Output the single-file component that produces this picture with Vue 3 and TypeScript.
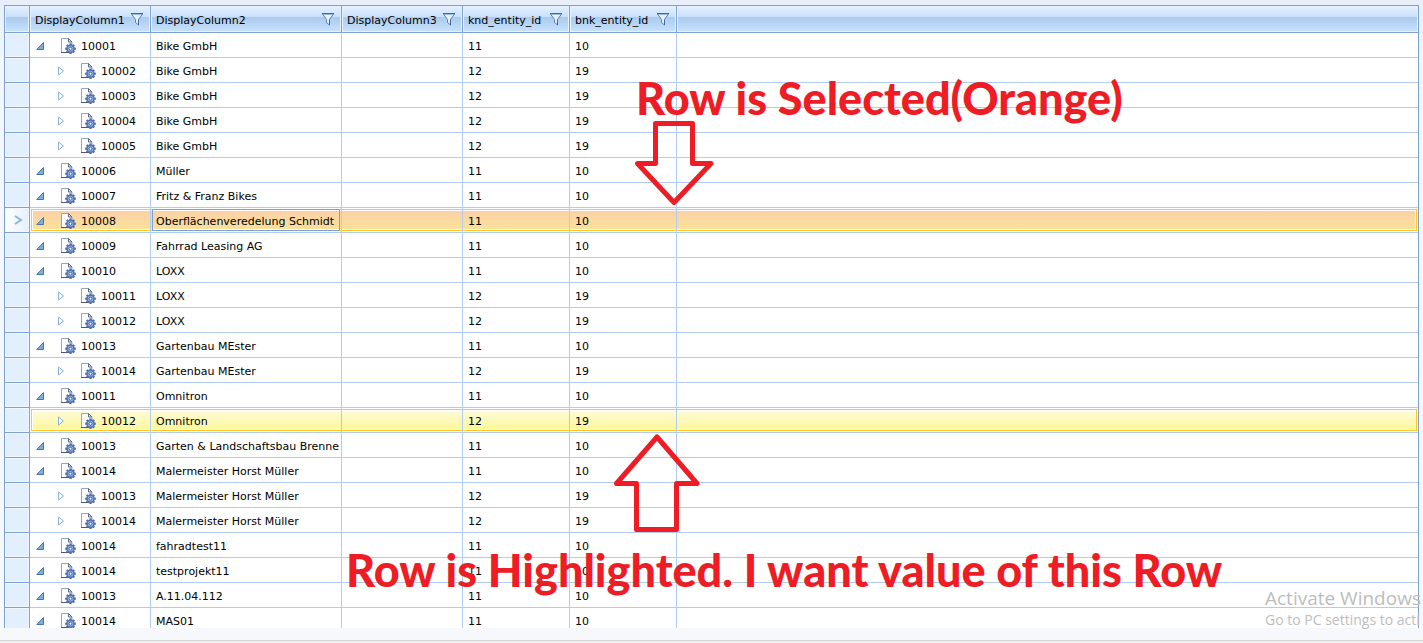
<script setup lang="ts">
import { ref } from 'vue'

interface Row {
  id: string
  name: string
  level: 0 | 1
}

const columns = ['DisplayColumn1', 'DisplayColumn2', 'DisplayColumn3', 'knd_entity_id', 'bnk_entity_id']

const rows: Row[] = [
  { id: '10001', name: 'Bike GmbH', level: 0 },
  { id: '10002', name: 'Bike GmbH', level: 1 },
  { id: '10003', name: 'Bike GmbH', level: 1 },
  { id: '10004', name: 'Bike GmbH', level: 1 },
  { id: '10005', name: 'Bike GmbH', level: 1 },
  { id: '10006', name: 'Müller', level: 0 },
  { id: '10007', name: 'Fritz & Franz Bikes', level: 0 },
  { id: '10008', name: 'Oberflächenveredelung Schmidt', level: 0 },
  { id: '10009', name: 'Fahrrad Leasing AG', level: 0 },
  { id: '10010', name: 'LOXX', level: 0 },
  { id: '10011', name: 'LOXX', level: 1 },
  { id: '10012', name: 'LOXX', level: 1 },
  { id: '10013', name: 'Gartenbau MEster', level: 0 },
  { id: '10014', name: 'Gartenbau MEster', level: 1 },
  { id: '10011', name: 'Omnitron', level: 0 },
  { id: '10012', name: 'Omnitron', level: 1 },
  { id: '10013', name: 'Garten & Landschaftsbau Brenne', level: 0 },
  { id: '10014', name: 'Malermeister Horst Müller', level: 0 },
  { id: '10013', name: 'Malermeister Horst Müller', level: 1 },
  { id: '10014', name: 'Malermeister Horst Müller', level: 1 },
  { id: '10014', name: 'fahradtest11', level: 0 },
  { id: '10014', name: 'testprojekt11', level: 0 },
  { id: '10013', name: 'A.11.04.112', level: 0 },
  { id: '10014', name: 'MAS01', level: 0 },
]

const selected = ref(7)
const highlighted = 15
const teeth = [0, 45, 90, 135, 180, 225, 270, 315]
</script>

<template>
  <div class="page">
    <main class="grid">
      <table>
        <colgroup>
          <col class="c-mark" /><col class="c-tree" /><col class="c-name" /><col class="c-tree" />
          <col class="c-id" /><col class="c-id" /><col />
        </colgroup>
        <thead>
          <tr>
            <th></th>
            <th v-for="c in columns" :key="c" scope="col">
              <div class="head">
                <span>{{ c }}</span>
                <button class="filter" type="button" :aria-label="'Filter ' + c">
                  <svg width="12" height="13" viewBox="0 0 12 13">
                    <path d="M.5 1H11.5L7.5 6.500V12L4.500 9.500V6.500Z" fill="#e4f1fe" stroke="#5482bd" />
                    <path d="M0 .5H12" stroke="#3c6aa6" />
                    <path d="M7.500 6.500V12" stroke="#41699f" />
                  </svg>
                </button>
              </div>
            </th>
            <th></th>
          </tr>
        </thead>
        <tbody>
          <tr
            v-for="(r, i) in rows"
            :key="i"
            :class="{ selected: i === selected, highlighted: i === highlighted }"
            @click="selected = i"
          >
            <td class="mark">
              <svg v-if="i === selected" width="9" height="10" viewBox="0 0 9 10">
                <path d="M1 1L7 5L1 9" fill="none" stroke="#8db4e3" stroke-width="2" />
              </svg>
            </td>
            <td class="node">
              <div class="tree" :class="{ child: r.level === 1 }">
                <button class="toggle" type="button" :aria-label="(r.level ? 'Expand ' : 'Collapse ') + r.id">
                  <svg width="10" height="10" viewBox="0 0 10 10">
                    <path v-if="r.level" d="M2.500 1V9L7.500 5Z" fill="#fff" stroke="#8cb0dc" />
                    <path v-else d="M7.500 1.500V8.500H.8Z" fill="#7db0e0" stroke="#4674ad" />
                  </svg>
                </button>
                <svg class="doc" width="16" height="17" viewBox="0 0 16 17">
                  <path d="M.5 .5H7.500L11 4V14.500H.5Z" fill="#fbfcfe" stroke="#97a5bb" />
                  <path d="M7.500 .5V4H11Z" fill="#dbe3ee" stroke="#5e6d88" />
                  <path d="M0 14.500H8" stroke="#49587a" />
                  <g transform="translate(9.500 10.700)">
                    <rect
                      v-for="a in teeth"
                      :key="a"
                      x="-1.100"
                      y="-5.300"
                      width="2.200"
                      height="3"
                      fill="#4a69a8"
                      :transform="`rotate(${a})`"
                    />
                    <circle r="3.500" fill="#9db5e4" stroke="#5273b5" stroke-width="1.500" />
                    <circle r="1.500" fill="#f5f8ff" stroke="#38558f" stroke-width=".9" />
                  </g>
                </svg>
                <span>{{ r.id }}</span>
              </div>
            </td>
            <td :class="{ current: i === selected }">{{ r.name }}</td>
            <td></td>
            <td>{{ r.level ? 12 : 11 }}</td>
            <td>{{ r.level ? 19 : 10 }}</td>
            <td></td>
          </tr>
        </tbody>
      </table>
    </main>
    <footer class="status"></footer>

    <p class="note note-selected">Row is Selected(Orange)</p>
    <svg class="arrow arrow-down" width="80" height="86" viewBox="0 0 80 86">
      <path d="M21.500 3.500H58.500V43.500H77L40 82.500L3.500 43.500H21.500Z" />
    </svg>
    <svg class="arrow arrow-up" width="88" height="98" viewBox="0 0 88 98">
      <path d="M44 3L84 49.500H63.500V95.500H23.500V49.500H3.500Z" />
    </svg>
    <p class="note note-highlighted">Row is Highlighted. I want value of this Row</p>

    <div class="watermark">
      <p class="wm-title">Activate Windows</p>
      <p class="wm-text">Go to PC settings to acti</p>
    </div>
  </div>
</template>

<style>
body {
  margin: 0;
}
</style>

<style scoped>
.page {
  position: relative;
  display: flex;
  flex-direction: column;
  box-sizing: border-box;
  height: 100vh;
  padding-top: 5px;
  overflow: hidden;
  background: linear-gradient(#e8eff8, #f3f6fb 60px, #f7f8fc);
  font: 11px/16px "DejaVu Sans", Verdana, sans-serif;
  color: #000;
}
.grid {
  flex: 1;
  min-height: 0;
  margin: 0 4px;
  overflow: hidden;
  border: solid #7da1d0;
  border-width: 1px 1px 0;
  background: #fff;
}
table {
  width: 100%;
  table-layout: fixed;
  border-collapse: separate;
  border-spacing: 0;
}
.c-mark { width: 25px; }
.c-tree { width: 121px; }
.c-name { width: 191px; }
.c-id { width: 107px; }
th {
  box-sizing: border-box;
  height: 27px;
  padding: 0;
  border: solid #7da1d0;
  border-width: 0 1px 1px 0;
  background: linear-gradient(#e6f1ff, #c9dffb 42%, #a9caee 43%, #c9e2fc);
  box-shadow: inset 0 0 0 1px #e6f2ff;
  font-weight: normal;
  text-align: left;
}
th:last-child, td:last-child { border-right: 0; }
.head {
  display: flex;
  align-items: center;
  justify-content: space-between;
  padding: 0 7px 0 5px;
  white-space: nowrap;
}
.head span { padding-top: 4px; }
.filter { padding-top: 1px; }
button {
  display: block;
  padding: 0;
  border: 0;
  background: none;
}
svg { display: block; }
tbody tr {
  position: relative;
  z-index: 0;
}
td {
  box-sizing: border-box;
  height: 25px;
  padding: 4px 0 0 5px;
  border: solid #b0cdf0;
  border-width: 0 1px 1px 0;
  white-space: nowrap;
}
.mark {
  padding: 0 0 0 9px;
  border-color: #7da1d0;
  background: #e2effd;
  box-shadow: inset 0 0 0 1px #f0f7ff;
}
.node { padding-top: 2px; }
.selected .mark { background: linear-gradient(90deg, #fff, #e4effc); }
.selected .mark::before, .highlighted .mark::before {
  content: "";
  position: absolute;
  z-index: -1;
  inset: 1px 1px 2px 26px;
  padding: 1px;
  border: 1px solid #fdc52f;
  background-clip: content-box;
}
.selected .mark::before { background-image: linear-gradient(#fdd0a6, #f9e29a); }
.highlighted .mark::before { background-image: linear-gradient(#fffbd9, #fdf79a); }
.current { position: relative; }
.current::after {
  content: "";
  position: absolute;
  inset: 1px;
  border: 1px solid #7da1d0;
}
.tree {
  display: flex;
  align-items: center;
  padding-left: 1px;
}
.tree span { padding-top: 1px; }
.child { padding-left: 21px; }
.toggle { margin-right: 15px; }
.doc { margin-right: 4px; }
.status {
  flex: none;
  height: 2px;
  margin-top: 12px;
  border-top: 1px solid #d5d5d5;
  background: #f0f0f0;
}
p { margin: 0; white-space: nowrap; }
.note {
  position: absolute;
  color: #ee1c25;
  font: 900 45px/52px Lato, Carlito, Calibri, sans-serif;
}
.note-selected { left: 636px; top: 72px; }
.note-highlighted { left: 346px; top: 544px; }
.arrow {
  position: absolute;
  fill: none;
  stroke: #ee1c25;
  stroke-width: 5;
  stroke-linejoin: round;
}
.arrow-down { left: 634px; top: 120px; }
.arrow-up { left: 613px; top: 434px; }
.watermark {
  position: absolute;
  right: 0;
  bottom: 13px;
  width: 158px;
  color: #bdbdbd;
  font-family: "Open Sans", "Segoe UI", sans-serif;
}
.wm-title { font-size: 19px; line-height: 24px; }
.wm-text { font-size: 14px; line-height: 20px; }
</style>
